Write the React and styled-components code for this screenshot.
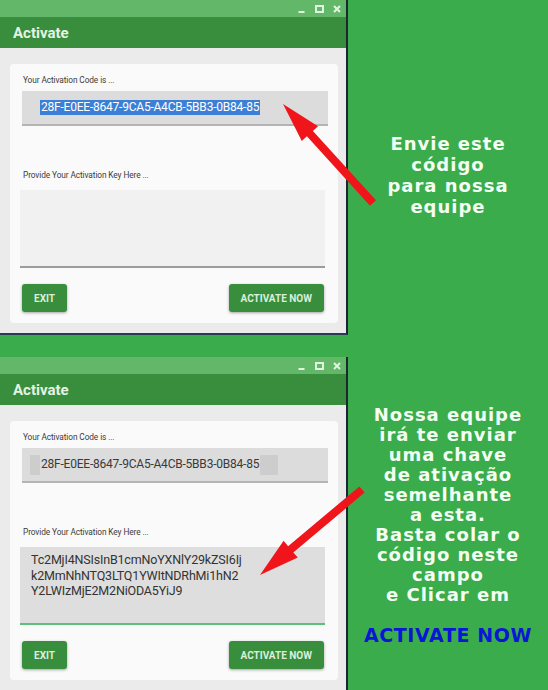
import React from "react";
import styled, { createGlobalStyle } from "styled-components";

const Global = createGlobalStyle`
  html, body { margin: 0; padding: 0; }
  body {
    width: 548px;
    height: 690px;
    overflow: hidden;
    background: #3bac4b;
    font-family: Roboto, "Liberation Sans", Arial, sans-serif;
  }
`;

const Page = styled.main`
  position: relative;
  width: 548px;
  height: 690px;
  overflow: hidden;
  background: #3bac4b;
  display: flex;
  flex-direction: column;
  gap: 22px;
`;

const Row = styled.section`
  flex: none;
  display: flex;
  align-items: center;
`;

const Window = styled.div`
  flex: none;
  width: 348px;
  height: 335px;
  box-sizing: border-box;
  border-right: 2px solid #1c2733;
  border-bottom: 2px solid #2a3a55;
  background: #ebebeb;
  display: flex;
  flex-direction: column;
`;

const TitleBar = styled.div`
  height: 17px;
  flex: none;
  background: #63b768;
  display: flex;
  justify-content: flex-end;
  align-items: center;
  gap: 9px;
  padding-right: 5px;
`;

const Header = styled.h1`
  margin: 0;
  height: 31px;
  flex: none;
  background: #388e3c;
  display: flex;
  align-items: center;
  padding-left: 13px;
  font-family: Roboto, "Liberation Sans", sans-serif;
  font-size: 15px;
  font-weight: 700;
  color: #e4f3e4;
`;

const Body = styled.div`
  flex: 1;
  padding: 16px 8px 10px 10px;
  display: flex;
  flex-direction: column;
`;

const Card = styled.div`
  flex: 1;
  background: #fafafa;
  border-radius: 4px;
  padding: 10px 10px 11px 12px;
  display: flex;
  flex-direction: column;
`;

const Label = styled.div`
  font-size: 8.3px;
  line-height: 12px;
  color: #3a3a3a;
  letter-spacing: -0.1px;
  padding-left: 1px;
  margin-top: ${(p) => p.$top || 0}px;
`;

const CodeField = styled.div`
  margin-top: 5px;
  height: 35px;
  box-sizing: border-box;
  background: #dcdcdc;
  border-bottom: 2px solid #b4b4b4;
  display: flex;
  align-items: center;
  padding-left: 8px;
  font-size: 12px;
  color: #3a3a3a;
`;

const SelEdge = styled.span`
  display: inline-block;
  width: ${(p) => p.$w}px;
  height: 20px;
  background: ${(p) => (p.$shade ? "#cdcdcd" : "transparent")};
`;

const CodeText = styled.span`
  line-height: 15px;
  padding: 0 1px;
  letter-spacing: -0.22px;
  background: ${(p) => (p.$selected ? "#3b80d6" : "transparent")};
  color: ${(p) => (p.$selected ? "#ffffff" : "#3a3a3a")};
`;

const KeyField = styled.div`
  margin-top: 9px;
  margin-left: -2px;
  margin-right: 3px;
  height: 78px;
  box-sizing: border-box;
  background: ${(p) => (p.$focused ? "#dedede" : "#f1f1f1")};
  border-bottom: 2px solid ${(p) => (p.$focused ? "#5cc07b" : "#9c9c9c")};
  padding: 5px 11px;
  font-size: 12.5px;
  letter-spacing: -0.18px;
  line-height: 15.5px;
  color: #333;
`;

const Buttons = styled.div`
  margin-top: 16px;
  display: flex;
  justify-content: space-between;
  padding-right: 4px;
`;

const Button = styled.button`
  height: 28px;
  border: none;
  border-radius: 3px;
  background: #388e3c;
  box-shadow: 0 1px 3px rgba(0, 0, 0, 0.35);
  color: #dcefdc;
  font-family: Roboto, "Liberation Sans", sans-serif;
  font-weight: 700;
  font-size: 10px;
  padding: 0 12px;
`;

const Note = styled.div`
  flex: 1;
  text-align: center;
  color: #f4fff4;
  font-family: "DejaVu Sans", Verdana, sans-serif;
  font-weight: 700;
  font-size: 18px;
  letter-spacing: 1px;
  line-height: ${(p) => p.$lh}px;
  margin-top: ${(p) => p.$top || 0}px;
`;

const Line = styled.div``;

const Callout = styled.div`
  margin-top: 20px;
  color: #0a16d6;
  font-size: 19px;
  letter-spacing: 0.6px;
`;

const Overlay = styled.svg`
  position: absolute;
  left: 0;
  top: 0;
  width: 548px;
  height: 690px;
  pointer-events: none;
`;

function Controls() {
  const c = "#e2f3e2";
  return (
    <>
      <svg width="8" height="10" viewBox="0 0 8 10">
        <rect x="0.5" y="7" width="6" height="2" fill={c} />
      </svg>
      <svg width="9" height="8" viewBox="0 0 9 8">
        <rect x="1" y="1" width="7" height="6" fill="none" stroke={c} strokeWidth="2" />
      </svg>
      <svg width="8" height="8" viewBox="0 0 8 8">
        <path d="M1 1 L7 7 M7 1 L1 7" stroke={c} strokeWidth="2" />
      </svg>
    </>
  );
}

function ActivateWindow({ selected, keyLines }) {
  return (
    <Window>
      <TitleBar>
        <Controls />
      </TitleBar>
      <Header>Activate</Header>
      <Body>
        <Card>
          <Label>Your Activation Code is ...</Label>
          <CodeField>
            <SelEdge $w={10} $shade={!selected} />
            <CodeText $selected={selected}>28F-E0EE-8647-9CA5-A4CB-5BB3-0B84-85</CodeText>
            {!selected && <SelEdge $w={18} $shade />}
          </CodeField>
          <Label $top={43}>Provide Your Activation Key Here ...</Label>
          <KeyField $focused={!!keyLines}>
            {keyLines && keyLines.map((l) => <Line key={l}>{l}</Line>)}
          </KeyField>
          <Buttons>
            <Button>EXIT</Button>
            <Button>ACTIVATE NOW</Button>
          </Buttons>
        </Card>
      </Body>
    </Window>
  );
}

export default function App() {
  return (
    <Page>
      <Global />
      <Row>
        <ActivateWindow selected />
        <Note $lh={21} $top={14}>
          <Line>Envie este</Line>
          <Line>código</Line>
          <Line>para nossa</Line>
          <Line>equipe</Line>
        </Note>
      </Row>
      <Row>
        <ActivateWindow
          keyLines={[
            "Tc2MjI4NSIsInB1cmNoYXNlY29kZSI6Ij",
            "k2MmNhNTQ3LTQ1YWItNDRhMi1hN2",
            "Y2LWIzMjE2M2NiODA5YiJ9",
          ]}
        />
        <Note $lh={20}>
          <Line>Nossa equipe</Line>
          <Line>irá te enviar</Line>
          <Line>uma chave</Line>
          <Line>de ativação</Line>
          <Line>semelhante</Line>
          <Line>a esta.</Line>
          <Line>Basta colar o</Line>
          <Line>código neste</Line>
          <Line>campo</Line>
          <Line>e Clicar em</Line>
          <Callout>ACTIVATE NOW</Callout>
        </Note>
      </Row>
      <Overlay viewBox="0 0 548 690">
        <polygon
          fill="#f0151b"
          points="283,104 318,126.2 312.9,130.9 376,200.3 370,205.7 306.9,136.3 301.8,141 "
        />
        <polygon
          fill="#f0151b"
          points="260,575 283.6,540.7 288.1,546.3 359.4,486.4 364.6,492.6 293.3,552.5 297.8,557.5"
        />
      </Overlay>
    </Page>
  );
}
